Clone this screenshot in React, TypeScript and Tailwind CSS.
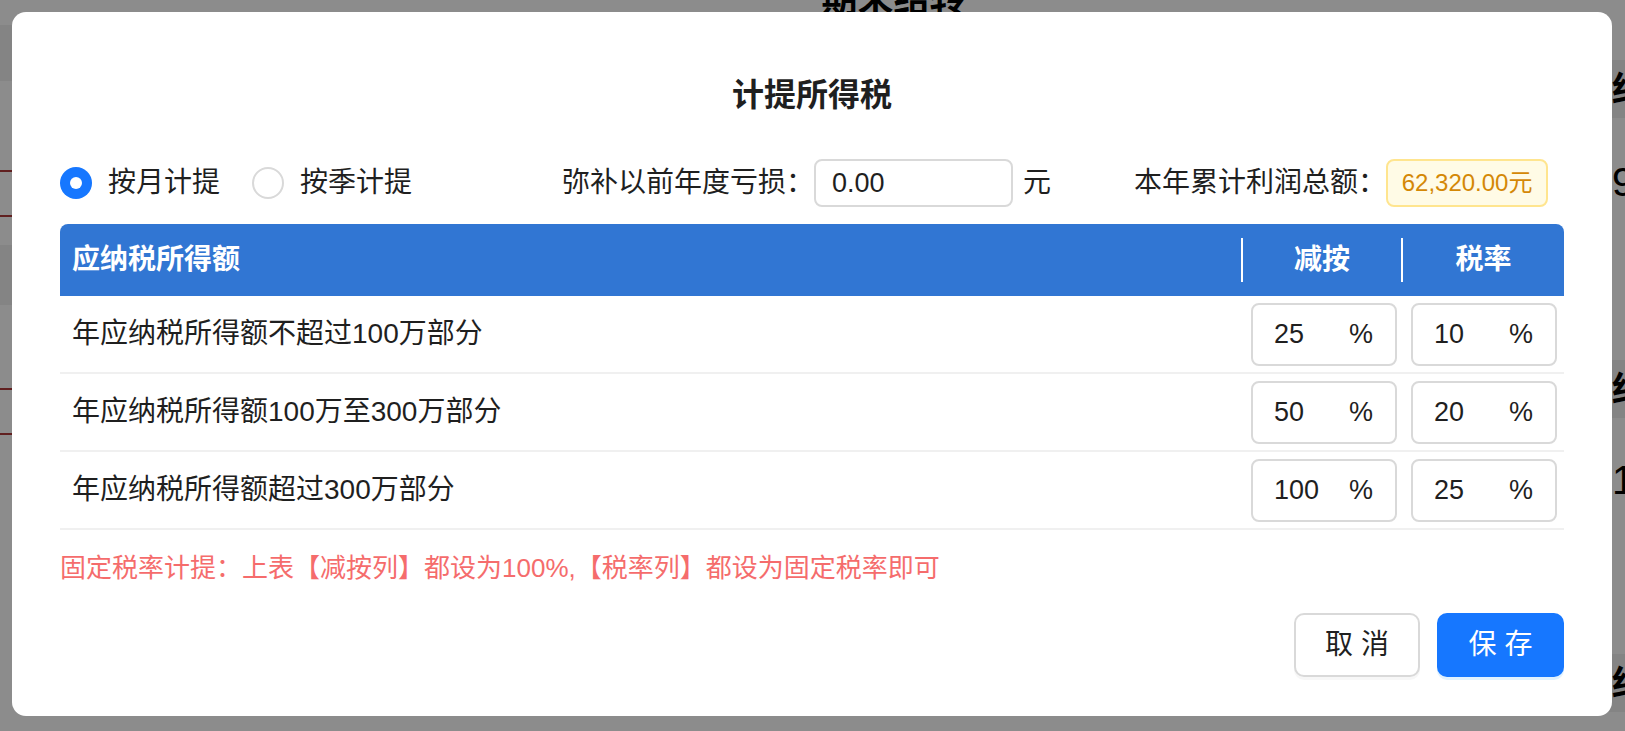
import React from 'react';

const rows = [
  { label: '年应纳税所得额不超过100万部分', a: '25', b: '10' },
  { label: '年应纳税所得额100万至300万部分', a: '50', b: '20' },
  { label: '年应纳税所得额超过300万部分', a: '100', b: '25' },
];

function PctBox({ v }: { v: string }) {
  return (
    <div className="h-[63px] w-[146px] border-2 border-[#d9d9d9] rounded-[8px] bg-white flex items-center justify-between pl-[21px] pr-[22px] text-[27px] text-[#1f1f1f]">
      <span>{v}</span>
      <span>%</span>
    </div>
  );
}

function LeftCard() {
  return (
    <div className="w-[647px] shrink-0 flex flex-col bg-white">
      <div className="h-[13px]" />
      <div className="h-[56px] bg-[#f0f0f0]" />
      <div className="h-[89px]" />
      <div className="h-[47px] border-y-2 border-[#b03a3a] w-[640px]" />
      <div className="h-[28px]" />
      <div className="h-[60px] bg-[#f0f0f0]" />
      <div className="h-[83px]" />
      <div className="h-[47px] border-y-2 border-[#b03a3a] w-[640px]" />
    </div>
  );
}

function MidCard() {
  return <div className="w-[647px] shrink-0 bg-white border-x-2 border-[#e5e5e5]" />;
}

function RightCard() {
  return (
    <div className="w-[647px] shrink-0 flex flex-col bg-white text-black">
      <div className="h-[48px]" />
      <div className="h-[58px] bg-[#f0f0f0] flex items-center pl-[28px] text-[34px] font-bold">结转损益</div>
      <div className="h-[40px]" />
      <div className="h-[48px] flex items-center pl-[28px] text-[40px]">9</div>
      <div className="h-[154px]" />
      <div className="h-[58px] bg-[#f0f0f0] flex items-center pl-[28px] text-[34px] font-bold">结转成本</div>
      <div className="h-[38px]" />
      <div className="h-[48px] flex items-center pl-[28px] text-[40px]">1</div>
      <div className="h-[150px]" />
      <div className="h-[58px] bg-[#f0f0f0] flex items-center pl-[28px] text-[34px] font-bold">结转税费</div>
    </div>
  );
}

export default function App() {
  return (
    <div className="relative w-[1625px] h-[731px] overflow-hidden bg-white font-['Liberation_Sans','Noto_Sans_CJK_SC',sans-serif]">
      {/* page behind the dialog */}
      <div className="flex flex-col w-full h-full">
        <div className="h-[36px] -mt-[24px] flex justify-center pl-[162px] text-[36px] leading-[48px] font-bold text-black">期末结转</div>
        <div className="flex gap-[31px] -ml-[450px]">
          <LeftCard />
          <MidCard />
          <MidCard />
          <RightCard />
        </div>
      </div>
      {/* mask */}
      <div className="absolute inset-0 bg-black/45" />
      {/* dialog */}
      <div className="absolute left-[12px] top-[12px] w-[1600px] bg-white rounded-[14px] px-[48px] pt-[59px] pb-[39px] flex flex-col text-[#1f1f1f]">
        <div className="text-center text-[32px] leading-[48px] font-bold">计提所得税</div>

        <div className="mt-[40px] h-[48px] flex items-center text-[28px]">
          <div className="w-[32px] h-[32px] rounded-full bg-[#1677ff] flex items-center justify-center shrink-0">
            <div className="w-[12px] h-[12px] rounded-full bg-white" />
          </div>
          <span className="ml-[16px] leading-[40px]">按月计提</span>
          <div className="ml-[32px] w-[32px] h-[32px] rounded-full border-2 border-[#d9d9d9] bg-white shrink-0" />
          <span className="ml-[16px] leading-[40px]">按季计提</span>

          <span className="ml-[150px] leading-[40px]">弥补以前年度亏损：</span>
          <div className="w-[199px] h-[48px] border-2 border-[#d9d9d9] rounded-[8px] pl-[16px] flex items-center text-[27px]">0.00</div>
          <span className="ml-[10px] leading-[40px]">元</span>

          <span className="ml-[83px] leading-[40px]">本年累计利润总额：</span>
          <div className="w-[162px] h-[48px] bg-[#fffbe6] border-2 border-[#ffe58f] rounded-[8px] flex items-center justify-center text-[24px] text-[#d48806]">62,320.00元</div>
        </div>

        <div className="mt-[17px] flex flex-col">
          <div className="h-[72px] bg-[#3176d3] rounded-t-[8px] flex items-center text-white font-bold text-[28px]">
            <div className="flex-1 pl-[12px]">应纳税所得额</div>
            <div className="w-[2px] h-[44px] bg-white" />
            <div className="w-[158px] text-center">减按</div>
            <div className="w-[2px] h-[44px] bg-white" />
            <div className="w-[161px] text-center">税率</div>
          </div>
          {rows.map((r) => (
            <div key={r.label} className="h-[78px] border-b-2 border-[#f0f0f0] flex items-center text-[28px]">
              <div className="flex-1 pl-[12px]">{r.label}</div>
              <div className="w-[2px]" />
              <div className="w-[158px] pl-[8px]">
                <PctBox v={r.a} />
              </div>
              <div className="w-[2px]" />
              <div className="w-[161px] pl-[8px]">
                <PctBox v={r.b} />
              </div>
            </div>
          ))}
        </div>

        <div className="mt-[18px] text-[26px] leading-[40px] text-[#f56c6c]">固定税率计提：上表【减按列】都设为100%,【税率列】都设为固定税率即可</div>

        <div className="mt-[25px] flex justify-end gap-[17px]">
          <button className="w-[126px] h-[64px] border-2 border-[#d9d9d9] rounded-[10px] bg-white text-[28px] text-[#1f1f1f] shadow-[0_3px_0_rgba(0,0,0,0.03)]">取 消</button>
          <button className="w-[127px] h-[64px] rounded-[10px] bg-[#1677ff] text-[28px] text-white shadow-[0_3px_0_rgba(5,145,255,0.12)]">保 存</button>
        </div>
      </div>
    </div>
  );
}
